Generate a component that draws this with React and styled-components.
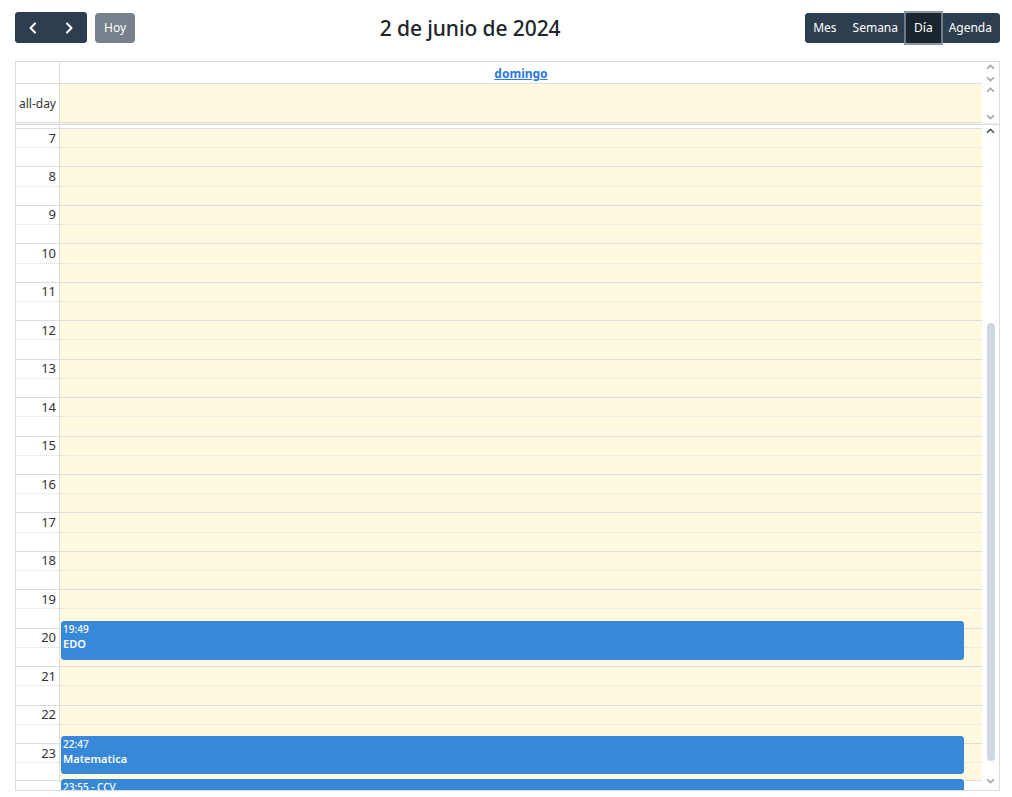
import React from "react";
import styled, { createGlobalStyle, css } from "styled-components";

const HOUR = 38.46;
const SLOT = HOUR / 2;

const GlobalStyle = createGlobalStyle`
  html, body { margin: 0; padding: 0; background: #fff; }
  body {
    font-family: "Noto Sans", "Open Sans", "DejaVu Sans", sans-serif;
    color: #212529;
  }
  * { box-sizing: border-box; }
`;

const Page = styled.div`
  padding: 12px 12px 0 15px;
`;

const Toolbar = styled.div`
  display: flex;
  justify-content: space-between;
  align-items: center;
  height: 31px;
  margin-bottom: 18px;
`;

const LeftTools = styled.div`
  display: flex;
  align-items: center;
  gap: 8px;
`;

const Group = styled.div`
  display: flex;
  background: #2c3e50;
  border-radius: 4px;
`;

const Button = styled.button`
  border: 0;
  margin: 0;
  font-family: inherit;
  font-size: 12px;
  color: #fff;
  background: #2c3e50;
  height: ${(p) => (p.$tall ? 31 : 30)}px;
  padding: 0 ${(p) => p.$pad ?? 8}px;
  display: flex;
  align-items: center;
  justify-content: center;
  cursor: pointer;
  border-radius: ${(p) => p.$radius ?? "0"};
  ${(p) =>
    p.$disabled &&
    css`
      background: rgb(118, 129, 141);
      border-radius: 4px;
    `}
  ${(p) =>
    p.$active &&
    css`
      background: #1a252f;
      box-shadow: 0 0 0 2px rgba(124, 134, 145, 0.85);
      position: relative;
      z-index: 1;
    `}
`;

const Title = styled.h2`
  margin: 0;
  font-size: 21px;
  font-weight: 500;
  color: #212529;
  letter-spacing: -0.1px;
`;

const Calendar = styled.div`
  border: 1px solid #ddd;
  height: 730px;
  display: flex;
  flex-direction: column;
`;

const Row = styled.div`
  display: grid;
  grid-template-columns: 44px 1fr 17px;
  height: ${(p) => p.$h}px;
`;

const AxisCell = styled.div`
  border-right: 1px solid #ddd;
  border-bottom: 1px solid #ddd;
  display: flex;
  align-items: center;
  justify-content: flex-end;
  padding-right: 3px;
  font-size: 12px;
  color: #333;
  white-space: nowrap;
`;

const DayHeader = styled.div`
  display: flex;
  align-items: center;
  justify-content: center;
  padding-top: 1px;
  border-bottom: 1px solid #ddd;
`;

const DayLink = styled.a`
  font-size: 12px;
  font-weight: 700;
  color: #2a79e4;
  text-decoration: underline;
`;

const AllDayCell = styled.div`
  background: rgb(255, 249, 223);
  border-bottom: 1px solid #ddd;
`;

const MiniBar = styled.div`
  display: flex;
  flex-direction: column;
  justify-content: space-between;
  align-items: center;
  padding: ${(p) => p.$pad};
`;

const Divider = styled.div`
  height: 2px;
  background: #f1f1f1;
  border-bottom: 1px solid #ddd;
  flex-shrink: 0;
`;

const TimeBody = styled.div`
  flex: 1;
  overflow: hidden;
  display: grid;
  grid-template-columns: 44px 1fr 17px;
`;

const AxisCol = styled.div`
  border-right: 1px solid #ddd;
  padding-top: 3px;
  height: ${3 + 17 * HOUR + 1}px;
`;

const DayCol = styled.div`
  position: relative;
  padding-top: 3px;
`;

const DayGrid = styled.div`
  background: rgb(255, 249, 223);
`;

const Slot = styled.div`
  height: ${SLOT}px;
  border-top: 1px ${(p) => (p.$half ? "dotted" : "solid")} #ddd;
  ${(p) => p.$last && css`border-bottom: 1px solid #ddd;`}
`;

const AxisSlot = styled(Slot)`
  display: flex;
  align-items: center;
  justify-content: flex-end;
  padding-right: 3px;
  font-size: 13px;
  color: #333;
  line-height: 1;
`;

const Event = styled.div`
  position: absolute;
  left: 1px;
  right: 18px;
  background: #3788d8;
  border: 1px solid #3788d8;
  border-radius: 3px;
  color: #fff;
  padding: 1px 1px 0;
  overflow: hidden;
`;

const EventTime = styled.div`
  font-size: 10px;
  line-height: 13px;
  font-weight: 500;
  white-space: nowrap;
`;

const EventTitle = styled.div`
  font-size: 11px;
  line-height: 16px;
  font-weight: 600;
  white-space: nowrap;
`;

const Gutter = styled.div`
  display: flex;
  flex-direction: column;
  align-items: center;
  padding: 3px 0 6px;
`;

const Track = styled.div`
  flex: 1;
  display: flex;
  flex-direction: column;
  align-items: center;
`;

const Thumb = styled.div`
  width: 8px;
  height: 438px;
  border-radius: 4px;
  background: #cfd8e1;
  margin-top: auto;
  margin-bottom: 17px;
  margin-left: 1px;
`;

const Caret = ({ down, color = "#a3a3a3" }) => (
  <svg width="9" height="6" viewBox="0 0 9 6" style={{ display: "block" }}>
    <path
      d={down ? "M1 1.2 L4.5 4.6 L8 1.2" : "M1 4.8 L4.5 1.4 L8 4.8"}
      fill="none"
      stroke={color}
      strokeWidth="1.6"
    />
  </svg>
);

const Chevron = ({ dir }) => (
  <svg width="14" height="14" viewBox="0 0 14 14">
    <path
      d={dir === "left" ? "M9 2.5 L4.5 7 L9 11.5" : "M5 2.5 L9.5 7 L5 11.5"}
      fill="none"
      stroke="#fff"
      strokeWidth="2"
      strokeLinecap="round"
      strokeLinejoin="round"
    />
  </svg>
);

const events = [
  { start: [19, 49], mins: 60, time: "19:49", title: "EDO" },
  { start: [22, 47], mins: 60, time: "22:47", title: "Matematica" },
  { start: [23, 55], mins: 30, time: "23:55 - CCV", title: "" },
];

const hours = Array.from({ length: 17 }, (_, i) => 7 + i);

export default function App() {
  return (
    <Page>
      <GlobalStyle />
      <Toolbar>
        <LeftTools>
          <Group>
            <Button $tall $pad={11} $radius="4px 0 0 4px" aria-label="prev">
              <Chevron dir="left" />
            </Button>
            <Button $tall $pad={11} $radius="0 4px 4px 0" aria-label="next">
              <Chevron dir="right" />
            </Button>
          </Group>
          <Button $disabled $pad={9}>Hoy</Button>
        </LeftTools>
        <Title>2 de junio de 2024</Title>
        <Group>
          <Button $radius="4px 0 0 4px">Mes</Button>
          <Button>Semana</Button>
          <Button $active>Día</Button>
          <Button $radius="0 4px 4px 0">Agenda</Button>
        </Group>
      </Toolbar>

      <Calendar>
        <Row $h={22}>
          <AxisCell />
          <DayHeader>
            <DayLink href="#">domingo</DayLink>
          </DayHeader>
          <MiniBar $pad="2px 0 2px">
            <Caret />
            <Caret down />
          </MiniBar>
        </Row>
        <Row $h={39}>
          <AxisCell>all-day</AxisCell>
          <AllDayCell />
          <MiniBar $pad="3px 0 3px">
            <Caret />
            <Caret down />
          </MiniBar>
        </Row>
        <Divider />
        <TimeBody>
          <AxisCol>
            {hours.map((h) => (
              <React.Fragment key={h}>
                <AxisSlot>{h}</AxisSlot>
                <AxisSlot $half $last={h === 23} />
              </React.Fragment>
            ))}
          </AxisCol>
          <DayCol>
            <DayGrid>
              {hours.map((h) => (
                <React.Fragment key={h}>
                  <Slot />
                  <Slot $half $last={h === 23} />
                </React.Fragment>
              ))}
            </DayGrid>
            {events.map((e) => {
              const top = 3.5 + (e.start[0] - 7 + e.start[1] / 60) * HOUR;
              const height = (e.mins / 60) * HOUR;
              return (
                <Event key={e.time} style={{ top, height }}>
                  <EventTime>{e.time}</EventTime>
                  {e.title && <EventTitle>{e.title}</EventTitle>}
                </Event>
              );
            })}
          </DayCol>
          <Gutter>
            <Caret color="#505050" />
            <Track>
              <Thumb />
            </Track>
            <Caret down />
          </Gutter>
        </TimeBody>
      </Calendar>
    </Page>
  );
}
